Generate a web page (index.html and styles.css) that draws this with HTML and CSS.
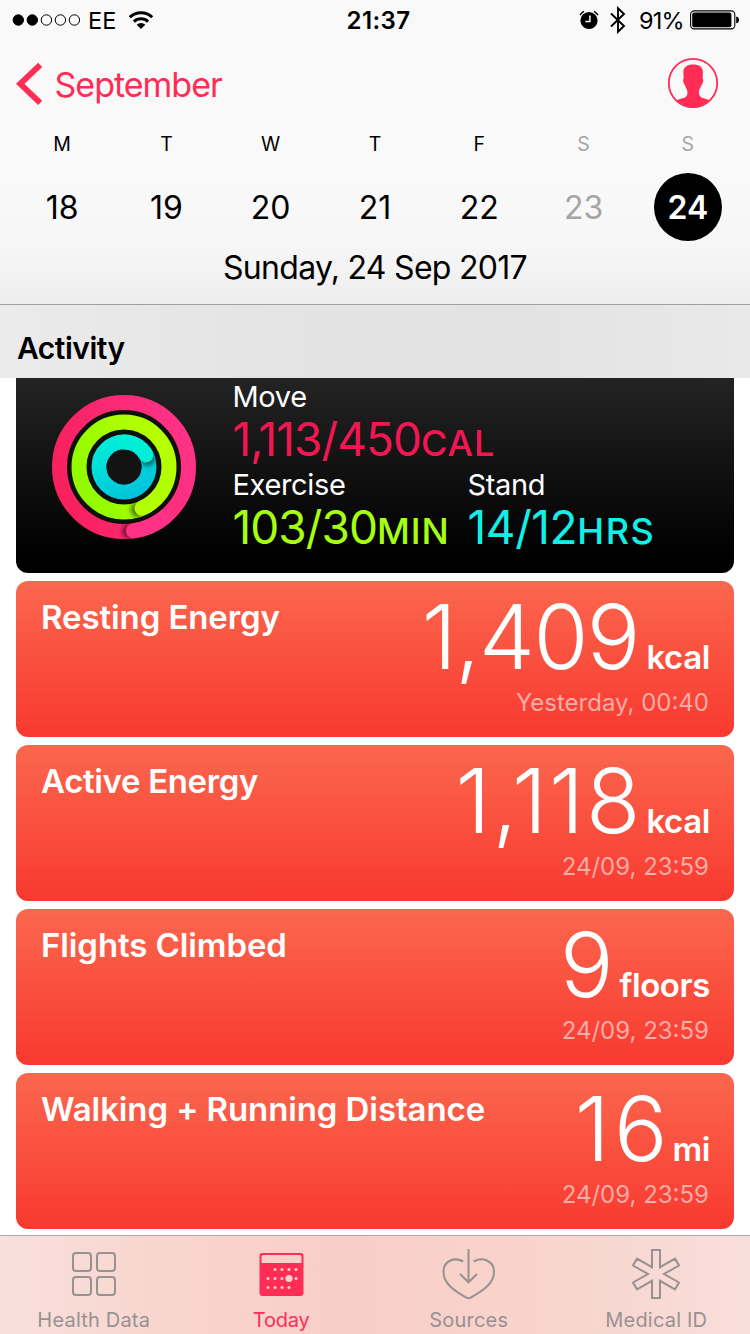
FILE: index.html
```
<!DOCTYPE html>
<html lang="en">
<head>
<meta charset="utf-8">
<title>Health</title>
<link rel="stylesheet" href="styles.css">
</head>
<body>
<div class="screen">
  <header class="top">
    <div class="status">
      <div class="status-left">
        <svg class="signal" width="70" height="14" viewBox="0 0 70 14"><g stroke="#000" stroke-width="1"><circle cx="6.3" cy="7" r="5.2"/><circle cx="20.3" cy="7" r="5.2"/><g fill="none"><circle cx="34.4" cy="7" r="5.2"/><circle cx="48.4" cy="7" r="5.2"/><circle cx="62.4" cy="7" r="5.2"/></g></g></svg>
        <span class="carrier">EE</span>
        <svg class="wifi" width="26" height="20" viewBox="0 0 26 20"><g fill="none" stroke="#000" stroke-width="3"><path d="M1.8 7.3A16 16 0 0 1 24.2 7.3"/><path d="M5.9 11.6A10.2 10.2 0 0 1 20.1 11.6"/></g><path d="M13 19L8.7 14.7A6.2 6.2 0 0 1 17.3 14.7Z"/></svg>
      </div>
      <span class="clock">21:37</span>
      <div class="status-right">
        <svg class="alarm" width="20" height="20" viewBox="0 0 20 20"><circle cx="10" cy="10.5" r="8.6"/><path d="M1 5.2A11.5 11.5 0 0 1 5 1.4M15 1.4A11.5 11.5 0 0 1 19 5.2" fill="none" stroke="#000" stroke-width="1.5"/><path d="M10.9 5.6V11.5H6.4" fill="none" stroke="#f9f9f9" stroke-width="1.5"/></svg>
        <svg class="bluetooth" width="16" height="28" viewBox="0 0 16 28"><path d="M1 7.5L14 20L8 25.8V2.2L14 8L1 20.5" fill="none" stroke="#000" stroke-width="1.9"/></svg>
        <span class="percent">91%</span>
        <svg class="battery" width="49" height="20" viewBox="0 0 49 20"><rect x=".6" y=".9" width="44.2" height="18" rx="3.6" fill="none" stroke="#000" stroke-width="1.1"/><rect x="2.2" y="2.5" width="39.2" height="14.8" rx="2"/><path d="M46.2 6.5Q49 7 49 9.9T46.2 13.3Z"/></svg>
      </div>
    </div>
    <nav class="nav">
      <a class="back"><svg width="28" height="44" viewBox="0 0 28 44"><path d="M25.2 2.8L5.200 21.800L25.2 40.800" fill="none" stroke="#ff2d55" stroke-width="5.800"/></svg><span>September</span></a>
      <svg class="profile" width="52" height="52" viewBox="0 0 52 52"><defs><clipPath id="face"><circle cx="26" cy="26" r="24.5"/></clipPath></defs><path clip-path="url(#face)" fill="#ff2d55" d="M16.3 15C16.5 10 20 7.5 26 7.500C32.500 7.500 35.700 10 36 15L35.600 21.500C36.800 22 36.300 25.500 34.700 27.800C33.800 30.500 32.500 32 32 34C31.700 37 32.300 39.500 35 40.800C38 42 42 42.500 45 45V52H7V45C10 42.500 14 42 17.500 40.800C20.300 39.500 20.700 37 20.300 34C19.700 32 18.500 30.500 17.700 27.800C16 25.500 15.500 22 16.700 21.500Z"/><circle cx="26" cy="26" r="24.200" fill="none" stroke="#ff2d55" stroke-width="1.800"/></svg>
    </nav>
    <div class="week names"><span>M</span><span>T</span><span>W</span><span>T</span><span>F</span><span class="dim">S</span><span class="dim">S</span></div>
    <div class="week days"><span>18</span><span>19</span><span>20</span><span>21</span><span>22</span><span class="dim">23</span><span class="selected">24</span></div>
    <div class="date">Sunday, 24 Sep 2017</div>
  </header>
  <h2 class="section">Activity</h2>
  <main class="list">
    <section class="activity">
      <svg class="rings" width="144" height="144" viewBox="0 0 144 144">
        <defs>
          <linearGradient id="move" gradientUnits="userSpaceOnUse" x1="10" y1="130" x2="140" y2="90"><stop offset="0" stop-color="#f71f5b"/><stop offset="1" stop-color="#ff3185"/></linearGradient>
          <linearGradient id="exercise" gradientUnits="userSpaceOnUse" x1="30" y1="110" x2="115" y2="70"><stop offset="0" stop-color="#8ffa00"/><stop offset="1" stop-color="#b4ff00"/></linearGradient>
          <linearGradient id="stand" gradientUnits="userSpaceOnUse" x1="60" y1="40" x2="88" y2="98"><stop offset="0" stop-color="#00eed8"/><stop offset="1" stop-color="#00c3dc"/></linearGradient>
          <filter id="soft" x="-50%" y="-50%" width="200%" height="200%"><feGaussianBlur stdDeviation="2.500"/></filter>
          <clipPath id="c1"><path clip-rule="evenodd" d="M0 72a72 72 0 1 0 144 0a72 72 0 1 0-144 0M15 72a57 57 0 1 0 114 0a57 57 0 1 0-114 0"/></clipPath>
          <clipPath id="c2"><path clip-rule="evenodd" d="M19.500 72a52.500 52.500 0 1 0 105 0a52.500 52.500 0 1 0-105 0M34.500 72a37.500 37.500 0 1 0 75 0a37.500 37.500 0 1 0-75 0"/></clipPath>
          <clipPath id="c3"><path clip-rule="evenodd" d="M39.500 72a32.500 32.500 0 1 0 65 0a32.500 32.500 0 1 0-65 0M54.500 72a17.500 17.500 0 1 0 35 0a17.500 17.500 0 1 0-35 0"/></clipPath>
        </defs>
        <circle cx="72" cy="72" r="60" fill="#0e0f0b"/>
        <g fill="none" stroke-width="15">
          <circle cx="72" cy="72" r="64.500" stroke="url(#move)"/>
          <circle cx="72" cy="72" r="45" stroke="url(#exercise)"/>
          <circle cx="72" cy="72" r="25" stroke="url(#stand)"/>
        </g>
        <circle cx="72" cy="72" r="17.500" fill="#131313"/>
        <g clip-path="url(#c1)"><circle cx="78" cy="136" r="7.500" opacity=".6" filter="url(#soft)"/></g>
        <g clip-path="url(#c2)"><circle cx="86.500" cy="114.500" r="7.500" opacity=".6" filter="url(#soft)"/></g>
        <g clip-path="url(#c3)"><circle cx="95.500" cy="63" r="7.500" opacity=".6" filter="url(#soft)"/></g>
        <g fill="none" stroke-width="15" stroke-linecap="round">
          <path d="M113.500 121.400A64.500 64.500 0 0 1 81.300 135.800" stroke="#ff3185"/>
          <path d="M108.900 97.800A45 45 0 0 1 90 113.200" stroke="#b2ff00"/>
          <path d="M72 47A25 25 0 0 1 94 60" stroke="#00eed8"/>
        </g>
      </svg>
      <div class="stats">
        <div class="stat move"><div class="label">Move</div><div class="amount">1,113/450<small>CAL</small></div></div>
        <div class="stat exercise"><div class="label">Exercise</div><div class="amount">103/30<small>MIN</small></div></div>
        <div class="stat stand"><div class="label">Stand</div><div class="amount">14/12<small>HRS</small></div></div>
      </div>
    </section>
    <section class="card"><h3>Resting Energy</h3><div class="reading"><div class="value"><b class="n-resting">1,409</b><span>kcal</span></div><time>Yesterday, 00:40</time></div></section>
    <section class="card"><h3 class="t-active">Active Energy</h3><div class="reading"><div class="value"><b class="n-active">1,118</b><span>kcal</span></div><time>24/09, 23:59</time></div></section>
    <section class="card"><h3>Flights Climbed</h3><div class="reading"><div class="value"><b>9</b><span>floors</span></div><time>24/09, 23:59</time></div></section>
    <section class="card"><h3>Walking + Running Distance</h3><div class="reading"><div class="value"><b class="n-walk">16</b><span>mi</span></div><time>24/09, 23:59</time></div></section>
  </main>
  <footer class="tabs">
    <a class="tab"><svg width="52" height="52" viewBox="0 0 52 52"><g fill="none" stroke="#979290" stroke-width="2"><rect x="5" y="5" width="18" height="18" rx="3"/><rect x="29" y="5" width="18" height="18" rx="3"/><rect x="5" y="29" width="18" height="18" rx="3"/><rect x="29" y="29" width="18" height="18" rx="3"/></g></svg><span>Health Data</span></a>
    <a class="tab active"><svg width="52" height="52" viewBox="0 0 52 52"><path fill="#ff2d55" fill-rule="evenodd" d="M7.500 5H45.500Q48.500 5 48.500 8V45Q48.500 48 45.500 48H7.500Q4.500 48 4.500 45V8Q4.500 5 7.500 5ZM6.500 8.500V15H46.500V8.500Q46.500 7 45 7H8Q6.500 7 6.500 8.500Z"/><g fill="#f8d3cd"><circle cx="20" cy="21.500" r="1.500"/><circle cx="27" cy="21.500" r="1.500"/><circle cx="34" cy="21.500" r="1.500"/><circle cx="41" cy="21.500" r="1.500"/><circle cx="13" cy="30.500" r="1.500"/><circle cx="20" cy="30.500" r="1.500"/><circle cx="27" cy="30.500" r="1.500"/><circle cx="34" cy="30.500" r="3.600"/><circle cx="41" cy="30.500" r="1.500"/><circle cx="13" cy="39.500" r="1.500"/><circle cx="20" cy="39.500" r="1.500"/><circle cx="27" cy="39.500" r="1.500"/><circle cx="34" cy="39.500" r="1.500"/></g></svg><span>Today</span></a>
    <a class="tab"><svg width="56" height="52" viewBox="0 0 56 52"><g fill="none" stroke="#979290" stroke-width="2"><path d="M22.300 13.500C13 8.500 2.500 13 2.500 24C2.500 35.500 13 42.500 25.300 49.600Q27.500 50.700 29.700 49.600C42 42.500 53 35.500 53 24C53 13 42 8.500 32.700 13.500"/><path d="M27.500 1V34M19 26L27.500 34.300L36 26"/></g></svg><span>Sources</span></a>
    <a class="tab"><svg width="52" height="52" viewBox="0 0 52 52"><path fill="none" stroke="#979290" stroke-width="2" d="M22 2H30V19.200L45 10.700L49 17.500L34 26L49 34.500L45 41.300L30 32.800V50H22V32.800L7 41.300L3 34.500L18 26L3 17.500L7 10.700L22 19.200Z"/></svg><span>Medical ID</span></a>
  </footer>
</div>
</body>
</html>
```
FILE: styles.css
```
* { box-sizing: border-box; margin: 0; padding: 0; }
body { font-family: Inter, "Liberation Sans", sans-serif; background: #fff; color: #000; }
svg { display: block; flex: none; }
.screen { width: 750px; height: 1334px; overflow: hidden; display: flex; flex-direction: column; background: #fff; white-space: nowrap; }

.top { height: 305px; flex: none; border-bottom: 1px solid #a0a0a0; background: linear-gradient(#f9f9f9 60%, #f6f6f6 82%, #ededed); }
.status { height: 40px; display: grid; grid-template-columns: 1fr auto 1fr; align-items: center; padding: 0 11px 0 12px; font-size: 23.500px; line-height: 40px; }
.status-left, .status-right { display: flex; align-items: center; }
.status-right { justify-content: flex-end; }
.carrier { margin-left: 6px; padding-top: 2px; line-height: 38px; }
.wifi { margin-left: 12px; }
.clock { font-weight: 600; font-size: 24px; margin-left: 6px; padding-top: 2px; line-height: 38px; letter-spacing: .4px; }
.bluetooth { margin-left: 11px; }
.percent { margin: 0 6px 0 13px; padding-top: 2px; line-height: 38px; letter-spacing: -.7px; }

.nav { height: 88px; display: flex; align-items: center; justify-content: space-between; padding: 0 31px 0 15px; }
.back { display: flex; align-items: center; gap: 11.500px; color: #ff2d55; font-size: 34px; letter-spacing: -1px; }
.back span { line-height: 42px; padding-top: 1px; }
.profile { margin-bottom: 2px; }
.week { display: grid; grid-template-columns: repeat(7, 1fr); padding: 0 10px; justify-items: center; text-align: center; }
.names { height: 32px; font-size: 19.500px; line-height: 32px; }
.days { height: 68px; margin-top: 13px; font-size: 32px; line-height: 69px; }
.dim { color: #a5a5a5; }
.selected { width: 68px; height: 68px; border-radius: 50%; background: #000; color: #fff; font-weight: 600; }
.date { text-align: center; font-size: 32px; line-height: 54px; letter-spacing: -.72px; }

.section { height: 73px; flex: none; padding: 22px 17px 0; font-size: 30px; line-height: 42px; font-weight: 600; letter-spacing: -.5px; background: linear-gradient(90deg, #ebebec, #e4e4e4 35%, #e3e3e3 70%, #e9e9ea); }
.list { height: 857px; flex: none; padding: 0 16px; display: flex; flex-direction: column; gap: 8px; }
.activity { height: 195px; flex: none; display: flex; gap: 36.500px; padding-left: 36px; border-radius: 0 0 12px 12px; background: linear-gradient(#232323, #000 92%); }
.rings { margin-top: 17px; }
.stats { display: grid; grid-template-columns: 235px 230px; grid-template-rows: 84px 84px; row-gap: 4px; }
.move { grid-column: 1 / 3; color: #f01752; }
.exercise { color: #a6ff10; }
.stand { color: #10f0e8; }
.label { color: #fff; font-size: 29px; line-height: 38px; height: 38px; letter-spacing: -.35px; }
.amount { font-size: 46px; line-height: 46px; letter-spacing: -.95px; }
.amount small { font-size: 36px; font-weight: 500; letter-spacing: .9px; }
.stand .amount { letter-spacing: -.4px; }
.stand .amount small { letter-spacing: 1.6px; }

.card { height: 156px; flex: none; display: flex; justify-content: space-between; padding: 0 24px 0 25px; border-radius: 12px; color: #fff; background: linear-gradient(#fb674e, #f8392f); }
.card h3 { margin-top: 16px; font-size: 33px; line-height: 40px; font-weight: 600; letter-spacing: -.1px; }
.card .t-active { letter-spacing: -.35px; }
.reading { width: 0; flex: 1; padding-top: 3px; display: flex; flex-direction: column; align-items: flex-end; }
.value { display: flex; align-items: baseline; gap: 6px; height: 104px; line-height: 106px; }
.value b { font-size: 89px; font-weight: 300; }
.value .n-resting { letter-spacing: -1.500px; margin-right: 1.500px; }
.value .n-active { letter-spacing: 2px; margin-right: -2px; }
.value .n-walk { letter-spacing: 4px; margin-right: -5px; }
.value span { font-size: 33px; font-weight: 600; line-height: 40px; letter-spacing: -.4px; }
.reading time { margin-right: 1px; font-size: 24px; line-height: 30px; color: rgba(255, 255, 255, .56); }

.tabs { height: 99px; flex: none; border-top: 1px solid #b1a9a5; display: grid; grid-template-columns: repeat(4, 1fr); background: linear-gradient(90deg, #f9e0dc, #f8d6cf 20%, #f8cfc8 45%, #f8d2cb 65%, #f8d8d2 85%, #f9dfdb); }
.tab { display: flex; flex-direction: column; align-items: center; padding-top: 12px; font-size: 20px; color: #979290; }
.tab span { line-height: 26px; margin-top: 7px; letter-spacing: .2px; }
.tab.active { color: #ff2d55; }
.tab.active span { letter-spacing: -.2px; }
```
